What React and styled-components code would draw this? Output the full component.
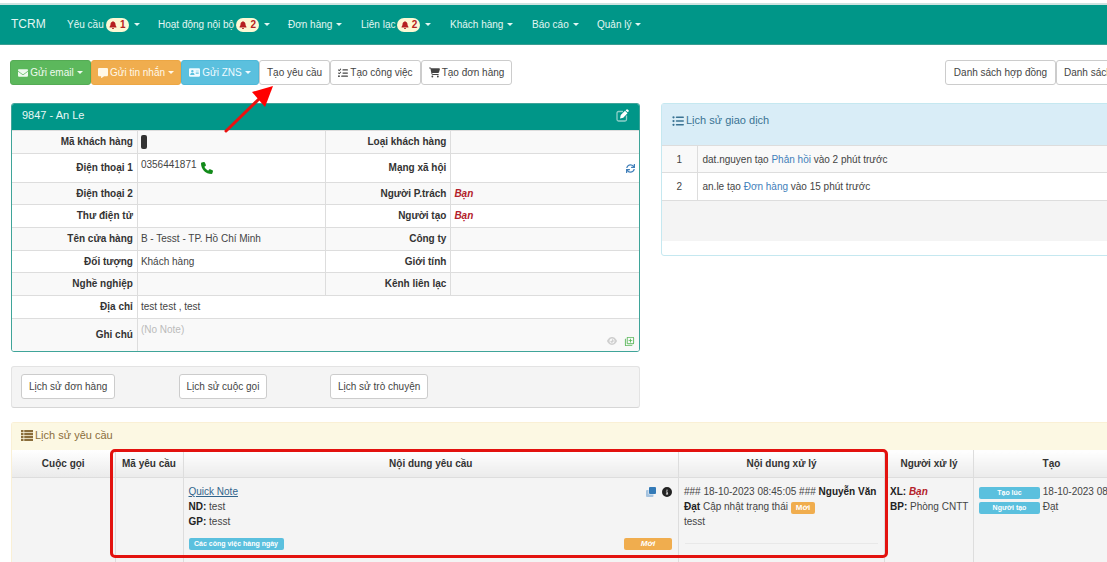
import React from "react";
import styled, { createGlobalStyle, css } from "styled-components";
import { FaBell, FaEnvelope, FaMessage, FaAddressCard, FaListCheck, FaCartShopping, FaPhone, FaEye, FaListUl, FaCircleInfo } from "react-icons/fa6";
import { FaSync } from "react-icons/fa";
import { MdOutlineLibraryAdd } from "react-icons/md";

const GlobalStyle = createGlobalStyle`
  *, *::before, *::after { box-sizing: border-box; }
  body {
    margin: 0;
    background: #fff;
    font-family: "Liberation Sans", Arial, sans-serif;
    font-size: 10px;
    line-height: 15px;
    color: #444;
  }
  button { font: inherit; cursor: pointer; }
  a { color: #4280ba; text-decoration: none; }
  svg { flex: none; }
`;

const Viewport = styled.div`
  overflow: hidden;
`;

const Page = styled.div`
  position: relative;
  min-width: 1301px;
  min-height: 100vh;
  padding-top: 3px;
`;

const Navbar = styled.nav`
  display: flex;
  align-items: center;
  height: 42px;
  padding: 0 11px;
  background: #009688;
  border-top: 2px solid #cfe3e0;
  border-bottom: 1px solid #3a9d92;
  color: #e2f6f3;
`;

const Brand = styled.a`
  width: 56px;
  font-size: 12px;
  color: #e2f6f3;
`;

const NavItem = styled.a`
  display: flex;
  align-items: center;
  width: ${(p) => p.$w}px;
  white-space: nowrap;
  color: #e2f6f3;
`;

const Badge = styled.span`
  display: inline-flex;
  align-items: center;
  justify-content: center;
  gap: 3px;
  width: 23px;
  height: 14px;
  margin: 0 1px 0 2px;
  border-radius: 7px;
  background: #fcf8d4;
  color: #b52020;
  font-weight: bold;
`;

const Caret = styled.span`
  width: 0;
  height: 0;
  margin-left: ${(p) => p.$gap || 4}px;
  border: 3px solid transparent;
  border-top-color: currentColor;
  border-bottom: 0;
`;

const Toolbar = styled.div`
  display: flex;
  padding: 15px 10px 18px;
`;

const ButtonGroup = styled.div`
  display: flex;
  width: ${(p) => p.$w};
`;

const tones = {
  green: css`background: #5cb85c; border-color: #55ab55; color: #eefaee;`,
  orange: css`background: #f0ad4e; border-color: #eda744; color: #fff8e8;`,
  blue: css`background: #5bc0de; border-color: #4fb8d8; color: #effaff;`,
};

const Button = styled.button`
  display: inline-flex;
  align-items: center;
  justify-content: center;
  gap: 2px;
  height: 25px;
  padding: 0 7px;
  background: #fff;
  border: 1px solid #ccc;
  border-radius: 3px;
  color: #444;
  white-space: nowrap;
  ${(p) => p.$w && `width: ${p.$w}px; padding: 0;`}
  ${(p) => tones[p.$tone]}
`;

const Columns = styled.div`
  display: grid;
  grid-template-columns: 1fr 1fr;
  gap: 21px;
  padding: 0 11px;
  align-items: start;
`;

const CustomerPanel = styled.section`
  border: 1px solid #3fa499;
  border-radius: 3px;
  overflow: hidden;
`;

const CustomerHead = styled.header`
  display: flex;
  align-items: center;
  justify-content: space-between;
  height: 26px;
  padding: 0 10px 3px;
  background: #009688;
  color: #e8f8f6;
  font-size: 11px;
`;

const IconButton = styled.button`
  display: inline-flex;
  padding: 0;
  border: 0;
  background: none;
  color: ${(p) => p.$color};
`;

const InfoTable = styled.table`
  width: 100%;
  table-layout: fixed;
  border-collapse: collapse;
  tr { height: 23px; }
  tr:nth-child(3), tr:nth-child(6) { height: 22px; }
  tr:nth-child(2) { height: 29px; }
  tr:last-child { height: 32px; }
  tr:nth-child(odd) { background: #f9f9f9; }
  th, td {
    padding: 0 4px 0 3px;
    border-top: 1px solid #ddd;
    border-right: 1px solid #ddd;
    text-align: left;
    line-height: 14px;
  }
  th { text-align: right; color: #333; white-space: nowrap; }
  td:last-child { border-right: 0; }
`;

const CellRow = styled.div`
  display: flex;
  align-items: center;
  justify-content: ${(p) => p.$justify || "flex-start"};
  gap: ${(p) => p.$gap || 6}px;
`;

const PhoneNumber = styled.span`
  padding-bottom: 6px;
`;

const CodeMark = styled.span`
  display: block;
  width: 6px;
  height: 14px;
  border-radius: 2px;
  background: #333;
`;

const NoteCell = styled.div`
  display: flex;
  justify-content: space-between;
  align-items: flex-end;
  height: 30px;
  padding-bottom: 3px;
`;

const Muted = styled.span`
  align-self: flex-start;
  color: #bbb;
  line-height: 20px;
`;

const You = styled.strong`
  color: #b3202a;
  font-style: italic;
`;

const Well = styled.div`
  display: grid;
  grid-template-columns: 157fr 151fr 299fr;
  justify-items: start;
  margin-top: 14px;
  padding: 7px 9px 8px;
  background: #f4f4f4;
  border: 1px solid #e3e3e3;
  border-bottom-color: #d6d6d6;
  border-radius: 3px;
`;

const DealPanel = styled.section`
  border: 1px solid #c5e8f0;
  border-radius: 3px;
`;

const DealHead = styled.h2`
  display: flex;
  align-items: center;
  gap: 2px;
  height: 41px;
  margin: 0;
  padding: 0 10px 8px;
  background: #d9edf7;
  color: #3a7393;
  font-size: 11px;
  font-weight: normal;
`;

const DealTable = styled.table`
  width: 100%;
  border-collapse: collapse;
  tr { height: 27px; border-top: 1px solid #ddd; }
  tr:first-child { background: #f9f9f9; }
  td { padding: 0 5px; }
  td:first-child { width: 35px; text-align: center; border-right: 1px solid #ddd; }
`;

const DealFoot = styled.footer`
  height: 41px;
  margin-bottom: 14px;
  background: #f4f4f4;
  border-top: 1px solid #ddd;
`;

const RequestPanel = styled.section`
  position: relative;
  margin: 14px 11px 0;
  border: 1px solid #faf0d5;
  border-bottom: 0;
  border-radius: 3px 3px 0 0;
`;

const RequestHead = styled.h2`
  display: flex;
  align-items: center;
  gap: 2px;
  height: 27px;
  margin: 0;
  padding: 0 9px 1px;
  background: #fcf8e3;
  color: #8a6d3b;
  font-size: 11px;
  font-weight: normal;
`;

const RequestTable = styled.table`
  width: 100%;
  table-layout: fixed;
  border-collapse: collapse;
  th {
    height: 28px;
    padding: 0;
    background: linear-gradient(#fff, #ebebeb);
    border-right: 1px solid #ddd;
    border-bottom: 1px solid #ddd;
    color: #333;
  }
  td {
    height: 84px;
    padding: 6px 5px 0;
    background: #f4f4f4;
    border-right: 1px solid #ddd;
    vertical-align: top;
    line-height: 15px;
  }
  b { color: #222; }
  hr { margin: 14px 1px 0; border: 0; border-top: 1px solid #e8e8e8; }
`;

const Spread = styled.div`
  display: flex;
  justify-content: space-between;
  align-items: center;
  padding-right: 1px;
  margin-top: ${(p) => p.$top || 0}px;
`;

const NoteLink = styled.a`
  color: #31648c;
  text-decoration: underline;
`;

const Line = styled.div`
  white-space: nowrap;
`;

const Label = styled.span`
  display: inline-block;
  width: ${(p) => (p.$w ? `${p.$w}px` : "auto")};
  padding: 0 ${(p) => (p.$w ? 0 : 5)}px;
  border-radius: 2px;
  background: ${(p) => (p.$orange ? "#f0ad4e" : "#5bc0de")};
  color: #fff;
  font-size: ${(p) => p.$size || 8}px;
  line-height: 12px;
  font-weight: bold;
  font-style: ${(p) => (p.$italic ? "italic" : "normal")};
  text-align: center;
  white-space: nowrap;
`;

const Highlight = styled.div`
  position: absolute;
  top: 26px;
  left: 98px;
  width: 778px;
  height: 109px;
  border: 3px solid #e3120f;
  border-radius: 5px;
  pointer-events: none;
`;

const Arrow = styled.svg`
  position: absolute;
  left: 222px;
  top: 84px;
  pointer-events: none;
`;

const EditIcon = () => (
  <svg width="13" height="13" viewBox="0 0 26 26" fill="none">
    <path d="M14 5H5a3 3 0 0 0-3 3v13a3 3 0 0 0 3 3h13a3 3 0 0 0 3-3v-8" stroke="#8fd0c9" strokeWidth="2.6" />
    <path d="M8 19l1.500-7L18 3.500l5 5L14.500 17.500zM19.200 2.800 21 1q1.500-1 3 .4l1 1q1.200 1.400 0 2.800l-1.300 1.300z" fill="#fff" />
  </svg>
);

const CloneIcon = () => (
  <svg width="10" height="10" viewBox="0 0 20 20">
    <path d="M2 6h3v7a2 2 0 0 0 2 2h8v3a2 2 0 0 1-2 2H2a2 2 0 0 1-2-2V8a2 2 0 0 1 2-2z" fill="#a5c3df" />
    <rect x="6" width="14" height="14" rx="2" fill="#337ab7" />
  </svg>
);

const GridListIcon = () => (
  <svg width="12" height="11" viewBox="0 0 24 22" fill="currentColor">
    {[0, 6, 12, 18].map((y) => (
      <g key={y}>
        <rect y={y} width="5" height="4.500" />
        <rect x="6.500" y={y} width="17.500" height="4.500" />
      </g>
    ))}
  </svg>
);

const nav = [
  { text: "Yêu cầu", count: 1, w: 91 },
  { text: "Hoạt động nội bộ", count: 2, w: 130 },
  { text: "Đơn hàng", w: 73 },
  { text: "Liên lạc", count: 2, w: 89 },
  { text: "Khách hàng", w: 82 },
  { text: "Báo cáo", w: 65 },
  { text: "Quản lý", w: 60 },
];

const Phone = () => (
  <CellRow $gap="4">
    <PhoneNumber>0356441871</PhoneNumber>
    <IconButton $color="#128a1a" aria-label="Gọi"><FaPhone size={12} /></IconButton>
  </CellRow>
);

const customerRows = [
  ["Mã khách hàng", <CodeMark />, "Loại khách hàng", ""],
  ["Điện thoại 1", <Phone />, "Mạng xã hội",
    <CellRow $justify="flex-end"><IconButton $color="#4280ba" aria-label="Tải lại"><FaSync size={9} /></IconButton></CellRow>],
  ["Điện thoại 2", "", "Người P.trách", <You>Bạn</You>],
  ["Thư điện tử", "", "Người tạo", <You>Bạn</You>],
  ["Tên cửa hàng", "B - Tesst - TP. Hồ Chí Minh", "Công ty", ""],
  ["Đối tượng", "Khách hàng", "Giới tính", ""],
  ["Nghề nghiệp", "", "Kênh liên lạc", ""],
];

const requestColumns = [
  ["Cuộc gọi", "103px"],
  ["Mã yêu cầu", "68px"],
  ["Nội dung yêu cầu", "auto"],
  ["Nội dung xử lý", "206px"],
  ["Người xử lý", "89px"],
  ["Tạo", "156px"],
  ["", "159px"],
];

export default function App() {
  return (
    <Viewport>
      <GlobalStyle />
      <Page>
        <Navbar>
          <Brand href="#">TCRM</Brand>
          {nav.map((item) => (
            <NavItem href="#" key={item.text} $w={item.w}>
              {item.text}
              {item.count && <Badge><FaBell size={8} />{item.count}</Badge>}
              <Caret />
            </NavItem>
          ))}
        </Navbar>

        <Toolbar>
          <ButtonGroup $w="935px">
            <Button $tone="green" $w={81}><FaEnvelope size={10} />Gửi email<Caret $gap="1" /></Button>
            <Button $tone="orange" $w={90}><FaMessage size={10} />Gửi tin nhắn<Caret $gap="1" /></Button>
            <Button $tone="blue" $w={78}><FaAddressCard size={11} />Gửi ZNS<Caret $gap="1" /></Button>
            <Button $w={71}>Tạo yêu cầu</Button>
            <Button $w={91}><FaListCheck size={10} />Tạo công việc</Button>
            <Button $w={91}><FaCartShopping size={11} />Tạo đơn hàng</Button>
          </ButtonGroup>
          <ButtonGroup>
            <Button $w={111}>Danh sách hợp đồng</Button>
            <Button>Danh sách</Button>
          </ButtonGroup>
        </Toolbar>

        <Columns>
          <div>
            <CustomerPanel>
              <CustomerHead>
                9847 - An Le
                <IconButton aria-label="Sửa"><EditIcon /></IconButton>
              </CustomerHead>
              <InfoTable>
                <colgroup>
                  <col style={{ width: "20%" }} />
                  <col style={{ width: "30%" }} />
                  <col style={{ width: "20%" }} />
                  <col style={{ width: "30%" }} />
                </colgroup>
                <tbody>
                  {customerRows.map(([a, b, c, d]) => (
                    <tr key={a}>
                      <th scope="row">{a}</th>
                      <td>{b}</td>
                      <th scope="row">{c}</th>
                      <td>{d}</td>
                    </tr>
                  ))}
                  <tr>
                    <th scope="row">Địa chỉ</th>
                    <td colSpan={3}>test test , test</td>
                  </tr>
                  <tr>
                    <th scope="row">Ghi chú</th>
                    <td colSpan={3}>
                      <NoteCell>
                        <Muted>(No Note)</Muted>
                        <CellRow $gap="7">
                          <IconButton $color="#cfcfcf" aria-label="Xem"><FaEye size={10} /></IconButton>
                          <IconButton $color="#5cb85c" aria-label="Thêm"><MdOutlineLibraryAdd size={11} /></IconButton>
                        </CellRow>
                      </NoteCell>
                    </td>
                  </tr>
                </tbody>
              </InfoTable>
            </CustomerPanel>
            <Well>
              <Button>Lịch sử đơn hàng</Button>
              <Button>Lịch sử cuộc gọi</Button>
              <Button>Lịch sử trò chuyện</Button>
            </Well>
          </div>

          <DealPanel>
            <DealHead><FaListUl size={12} />Lịch sử giao dịch</DealHead>
            <DealTable>
              <tbody>
                <tr>
                  <td>1</td>
                  <td>dat.nguyen tạo <a href="#">Phản hồi</a> vào 2 phút trước</td>
                </tr>
                <tr>
                  <td>2</td>
                  <td>an.le tạo <a href="#">Đơn hàng</a> vào 15 phút trước</td>
                </tr>
              </tbody>
            </DealTable>
            <DealFoot />
          </DealPanel>
        </Columns>

        <RequestPanel>
          <RequestHead><GridListIcon />Lịch sử yêu cầu</RequestHead>
          <RequestTable>
            <colgroup>
              {requestColumns.map(([name, width]) => <col key={name} style={{ width }} />)}
            </colgroup>
            <thead>
              <tr>{requestColumns.map(([name]) => <th key={name} scope="col">{name}</th>)}</tr>
            </thead>
            <tbody>
              <tr>
                <td />
                <td />
                <td>
                  <Spread>
                    <NoteLink href="#">Quick Note</NoteLink>
                    <CellRow>
                      <IconButton aria-label="Sao chép"><CloneIcon /></IconButton>
                      <IconButton $color="#222" aria-label="Chi tiết"><FaCircleInfo size={10} /></IconButton>
                    </CellRow>
                  </Spread>
                  <Line><b>ND:</b> test</Line>
                  <Line><b>GP:</b> tesst</Line>
                  <Spread $top={9}>
                    <Label $w={95} $size={7}>Các công việc hàng ngày</Label>
                    <Label $orange $italic $w={48}>Mới</Label>
                  </Spread>
                </td>
                <td>
                  ### 18-10-2023 08:45:05 ### <b>Nguyễn Văn Đạt</b> Cập nhật trạng thái <Label $orange>Mới</Label>
                  <br />
                  tesst
                  <hr />
                </td>
                <td>
                  <Line><b>XL:</b> <You>Bạn</You></Line>
                  <Line><b>BP:</b> Phòng CNTT</Line>
                </td>
                <td>
                  <Line><Label $w={61} $size={7}>Tạo lúc</Label> 18-10-2023 08:45</Line>
                  <Line><Label $w={61} $size={7}>Người tạo</Label> Đạt</Line>
                </td>
                <td />
              </tr>
            </tbody>
          </RequestTable>
          <Highlight />
        </RequestPanel>

        <Arrow width="54" height="50" viewBox="0 0 54 50">
          <path d="M4 47 38 14" stroke="#ea1210" strokeWidth="3" strokeLinecap="round" />
          <path d="M51 2 30 8l13 15z" fill="#ff0000" />
        </Arrow>
      </Page>
    </Viewport>
  );
}
